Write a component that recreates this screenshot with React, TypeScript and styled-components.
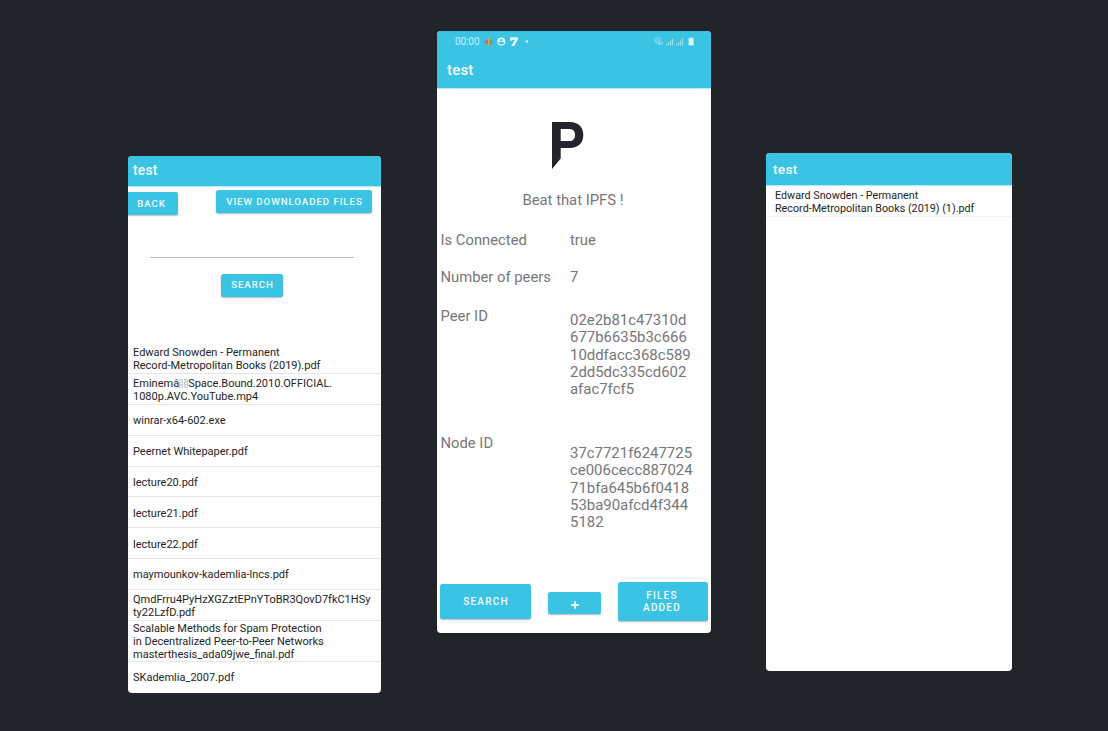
import React from 'react';
import styled, { createGlobalStyle } from 'styled-components';

const GlobalStyle = createGlobalStyle`
  * { box-sizing: border-box; }
  body {
    margin: 0;
    background: #212429;
    font-family: Roboto, "Liberation Sans", sans-serif;
  }
`;

const Stage = styled.main`
  display: flex;
  align-items: flex-start;
  width: 1108px;
  height: 731px;
  padding-left: 128px;
  overflow: hidden;
  background: #212429;
`;

const Screen = styled.section<{ $w: number; $h: number; $top: number; $gap?: number }>`
  display: flex;
  flex-direction: column;
  flex: none;
  width: ${(p) => p.$w}px;
  height: ${(p) => p.$h}px;
  margin-top: ${(p) => p.$top}px;
  margin-left: ${(p) => p.$gap ?? 0}px;
  overflow: hidden;
  border-radius: 4px;
  background: #fefefe;
`;

const AppBar = styled.header<{ $h: number; $pad: number; $size: number; $drop?: number }>`
  flex: none;
  display: flex;
  align-items: center;
  height: ${(p) => p.$h}px;
  padding: 0 0 ${(p) => p.$drop ?? 0}px ${(p) => p.$pad}px;
  background: #3bc3e4;
  color: #f4fcfe;
  font-size: ${(p) => p.$size}px;
  font-weight: 500;
  letter-spacing: 0.25px;
  box-shadow: 0 1px 1px rgba(59, 195, 228, 0.35);
`;

const StatusBar = styled.div`
  flex: none;
  display: flex;
  align-items: center;
  height: 21px;
  padding: 0 16px 0 18px;
  background: #3bc3e4;
  color: #c9f1fa;
  font-size: 10px;
`;

const Clock = styled.span`
  width: 29px;
  letter-spacing: -0.1px;
`;

const StatusSpacer = styled.span`
  flex: 1;
`;

const Button = styled.button<{ $w: number; $h: number; $large?: boolean; $flushLeft?: boolean }>`
  flex: none;
  display: flex;
  align-items: center;
  justify-content: center;
  width: ${(p) => p.$w}px;
  height: ${(p) => p.$h}px;
  padding: ${(p) => (p.$large ? '2px 0 0 1px' : p.$flushLeft ? '1px 3px 0 0' : '0 0 0 1px')};
  border: 0;
  border-radius: ${(p) => (p.$flushLeft ? '0 2px 2px 0' : '2.5px')};
  background: #3bc3e4;
  color: #effbfe;
  font-family: inherit;
  font-size: ${(p) => (p.$large ? 10 : 9.7)}px;
  font-weight: 500;
  line-height: 12px;
  letter-spacing: ${(p) => (p.$large ? 1.2 : 0.93)}px;
  text-align: center;
  white-space: pre-line;
  box-shadow: 0 1px 1.5px rgba(0, 0, 0, 0.28);
`;

const TwoLineLabel = styled.span`
  margin: 0 3px 0 0;
`;

const Actions = styled.div`
  flex: none;
  display: flex;
  justify-content: space-between;
  align-items: flex-start;
  height: 34px;
  padding: 4px 9px 0 0;
`;

const BackSlot = styled.div`
  padding-top: 2px;
`;

const SearchArea = styled.div`
  flex: none;
  display: flex;
  flex-direction: column;
  align-items: center;
  height: 123px;
  padding-right: 5px;
`;

const SearchField = styled.div`
  width: 204px;
  height: 38px;
  margin-bottom: 15.5px;
  border-bottom: 1px solid #b9b9b9;
`;

const FileList = styled.ul`
  margin: 0;
  padding: 0;
  list-style: none;
`;

const FileRow = styled.li<{ $h?: number; $pad?: number; $drop?: number; $size?: number; $faint?: boolean }>`
  display: flex;
  align-items: center;
  height: ${(p) => p.$h ?? 30.9}px;
  padding: ${(p) => p.$drop ?? 2}px 0 0 ${(p) => p.$pad ?? 5}px;
  border-bottom: 1px solid ${(p) => (p.$faint ? '#f1f1f1' : '#e5e5e5')};
  color: #252528;
  font-size: ${(p) => p.$size ?? 11}px;
  line-height: 13px;
  white-space: pre;
  &:last-child { border-bottom-color: ${(p) => (p.$faint ? '#f1f1f1' : 'transparent')}; }
`;

const MissingGlyph = styled.svg`
  width: 4px;
  height: 9px;
  margin-right: 0.5px;
  vertical-align: -1px;
`;

const Hero = styled.div`
  flex: none;
  display: flex;
  flex-direction: column;
  align-items: center;
  height: 132px;
  padding-top: 34px;
`;

const Logo = styled.svg`
  width: 32px;
  height: 48px;
  margin-right: 13px;
`;

const Tagline = styled.p`
  margin: 20px 2px 0 0;
  color: #77777a;
  font-size: 14.8px;
  line-height: 20px;
`;

const Details = styled.dl`
  flex: none;
  display: grid;
  grid-template-columns: 129.5px 1fr;
  grid-template-rows: 37px 38px 128px 159px;
  height: 362px;
  margin: 0;
  padding-left: 3.5px;
  color: #77777a;
  font-size: 14.8px;
`;

const Label = styled.dt<{ $top?: number }>`
  padding-top: ${(p) => p.$top ?? 11}px;
  line-height: 18px;
`;

const Value = styled.dd<{ $top?: number }>`
  margin: 0;
  padding-top: ${(p) => p.$top ?? 11}px;
  font-size: ${(p) => (p.$top ? 14.93 : 14.8)}px;
  line-height: ${(p) => (p.$top ? '17.35px' : '18px')};
  white-space: pre;
`;

const Footer = styled.footer`
  flex: none;
  display: flex;
  justify-content: space-between;
  align-items: center;
  height: 40px;
  margin-top: -1px;
  padding: 0 3px;
`;

const PlusSlot = styled.div`
  padding-top: 3px;
`;

const PlusIcon = styled.svg`
  width: 8px;
  height: 8px;
  margin: 5px 1px 0 0;
`;

function MissingBox() {
  return (
    <MissingGlyph viewBox="0 0 4 9" aria-hidden="true">
      <rect x="0.5" y="0.5" width="3" height="8" fill="none" stroke="#c2c2c2" strokeWidth="0.7" />
      <path d="M1 1.5l2 2.5M3 1.5L1 4M1 5.5h2M2 5v2.5" stroke="#b5b5b5" strokeWidth="0.6" />
    </MissingGlyph>
  );
}

function NotificationIcons() {
  return (
    <svg width="48" height="12" viewBox="0 0 48 12" aria-hidden="true">
      <g strokeWidth="1.4" strokeLinecap="round">
        <path d="M0.8 5.7v.6" stroke="#4a7fd0" />
        <path d="M2.7 4.5v3" stroke="#b4605f" />
        <path d="M4.7 2.5v7" stroke="#e5a642" />
        <path d="M6.6 4v4.2" stroke="#58a678" />
        <path d="M8.4 5.6v.8" stroke="#4a9cd5" />
      </g>
      <circle cx="17.3" cy="5.6" r="4.1" fill="#d8f4fb" />
      <circle cx="17.3" cy="4.1" r="1.2" fill="#3bc3e4" />
      <path d="M14.7 6h5.2v1c-1.1 1.8-4.1 1.8-5.2 0z" fill="#3bc3e4" />
      <path d="M26.2 1.3h7.8v1.9l-3.8 6.9h-2.9l3.5-6.4h-2.3l-.6 1.1h-2z" fill="#e4f8fd" />
      <circle cx="42.9" cy="5.5" r="1.3" fill="#d8f4fb" />
    </svg>
  );
}

function SystemIcons() {
  return (
    <svg width="42" height="12" viewBox="0 0 42 12" aria-hidden="true">
      <g fill="none" stroke="#8bdcef" strokeWidth="0.9">
        <path d="M.7 3.3c2.3-1.9 6-1.9 8.2 0L4.8 8.5z" />
        <path d="M2.2 4.7c1.5-1.1 3.6-1.1 5.1 0M3.3 6c1-.7 2-.7 3 0" />
      </g>
      <path d="M6.8 6.5V9M9 6v2.5" stroke="#c8f0f9" />
      <g fill="#9ce1f1">
        <path d="M13 7.7h1.2v1.8H13zM15 6.3h1.2v3.2H15zM17 4.6h1.2v4.9H17zM19 2.7h1.1v6.8H19z" />
        <path d="M23 7.7h1.2v1.8H23zM25 6.3h1.2v3.2H25zM27 4.6h1.2v4.9H27zM29 2.7h1.1v6.8H29z" />
      </g>
      <path d="M37 1.5h2.2v.8h1.4v7.3h-5V2.3H37z" fill="#dcf6fc" />
    </svg>
  );
}

const singleFiles = [
  'winrar-x64-602.exe',
  'Peernet Whitepaper.pdf',
  'lecture20.pdf',
  'lecture21.pdf',
  'lecture22.pdf',
];

function SearchScreen() {
  return (
    <Screen $w={253} $h={537} $top={156}>
      <AppBar $h={30} $pad={5} $size={13.8} $drop={3}>test</AppBar>
      <Actions>
        <BackSlot>
          <Button $w={50} $h={23} $flushLeft>BACK</Button>
        </BackSlot>
        <Button $w={156} $h={23}>VIEW DOWNLOADED FILES</Button>
      </Actions>
      <SearchArea>
        <SearchField />
        <Button $w={62} $h={23}>SEARCH</Button>
      </SearchArea>
      <FileList>
        <FileRow>{'Edward Snowden - Permanent\nRecord-Metropolitan Books (2019).pdf'}</FileRow>
        <FileRow>
          <div>
            <div>Eminemâ<MissingBox /><MissingBox />Space.Bound.2010.OFFICIAL.</div>
            <div>1080p.AVC.YouTube.mp4</div>
          </div>
        </FileRow>
        {singleFiles.map((name) => <FileRow key={name}>{name}</FileRow>)}
        <FileRow $drop={1}>maymounkov-kademlia-lncs.pdf</FileRow>
        <FileRow $drop={1}>{'QmdFrru4PyHzXGZztEPnYToBR3QovD7fkC1HSy\nty22LzfD.pdf'}</FileRow>
        <FileRow $h={41} $drop={1}>{'Scalable Methods for Spam Protection\nin Decentralized Peer-to-Peer Networks\nmasterthesis_ada09jwe_final.pdf'}</FileRow>
        <FileRow $h={32} $drop={0}>SKademlia_2007.pdf</FileRow>
      </FileList>
    </Screen>
  );
}

function HomeScreen() {
  return (
    <Screen $w={274} $h={602} $top={31} $gap={56}>
      <StatusBar>
        <Clock>00:00</Clock>
        <NotificationIcons />
        <StatusSpacer />
        <SystemIcons />
      </StatusBar>
      <AppBar $h={36} $pad={10} $size={14.9}>test</AppBar>
      <Hero>
        <Logo viewBox="0 0 32 48" aria-label="P">
          <path fillRule="evenodd" fill="#25232b" d="M0 0h18c8 0 13.3 5 13.3 13S26 26 18 26H8.7v10.5L0 47zM8.7 7v12H17c4 0 6-2 6-6s-2-6-6-6z" />
        </Logo>
        <Tagline>Beat that IPFS !</Tagline>
      </Hero>
      <Details>
        <Label>Is Connected</Label>
        <Value>true</Value>
        <Label>Number of peers</Label>
        <Value>7</Value>
        <Label $top={12}>Peer ID</Label>
        <Value $top={17}>{'02e2b81c47310d\n677b6635b3c666\n10ddfacc368c589\n2dd5dc335cd602\nafac7fcf5'}</Value>
        <Label>Node ID</Label>
        <Value $top={22}>{'37c7721f6247725\nce006cecc887024\n71bfa645b6f0418\n53ba90afcd4f344\n5182'}</Value>
      </Details>
      <Footer>
        <Button $w={91} $h={35} $large>SEARCH</Button>
        <PlusSlot>
          <Button $w={53} $h={22} aria-label="Add">
            <PlusIcon viewBox="0 0 8 8"><path d="M4 .2v7.6M.2 4h7.6" stroke="#f4fcfe" strokeWidth="1.8" /></PlusIcon>
          </Button>
        </PlusSlot>
        <Button $w={90} $h={39} $large><TwoLineLabel>{'FILES\nADDED'}</TwoLineLabel></Button>
      </Footer>
    </Screen>
  );
}

function DownloadsScreen() {
  return (
    <Screen $w={246} $h={518} $top={153} $gap={55}>
      <AppBar $h={32} $pad={7} $size={13.7}>test</AppBar>
      <FileList>
        <FileRow $pad={9} $h={31.5} $drop={3} $size={10.75} $faint>{'Edward Snowden - Permanent\nRecord-Metropolitan Books (2019) (1).pdf'}</FileRow>
      </FileList>
    </Screen>
  );
}

export default function App() {
  return (
    <>
      <GlobalStyle />
      <Stage>
        <SearchScreen />
        <HomeScreen />
        <DownloadsScreen />
      </Stage>
    </>
  );
}
